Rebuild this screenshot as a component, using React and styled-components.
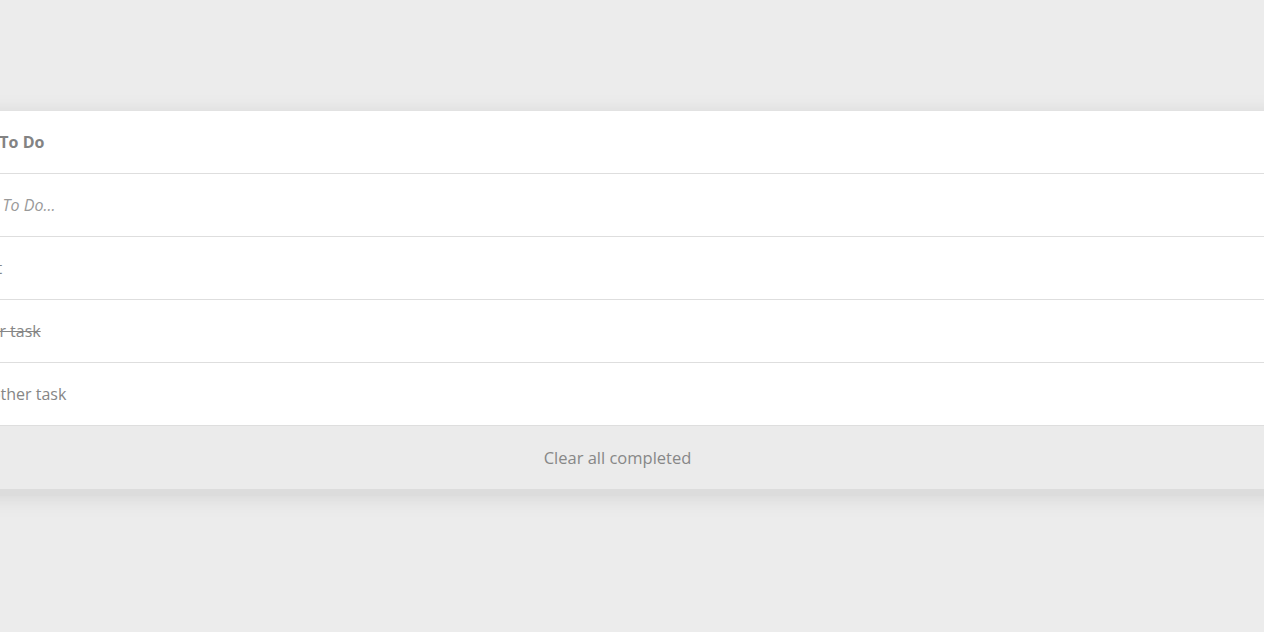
import styled, { createGlobalStyle } from "styled-components";

const GlobalStyle = createGlobalStyle`
  html, body {
    margin: 0;
    padding: 0;
    background-color: #ececec;
    font-family: "Open Sans", "DejaVu Sans", sans-serif;
    overflow: hidden;
  }
`;

const Page = styled.div`
  min-height: 632px;
  padding-top: 111px;
  box-sizing: border-box;
`;

const Card = styled.section`
  width: 1333px;
  margin-left: -49px;
  background-color: #fff;
  box-shadow: 0 7px 0 #dcdcdc, 0 10px 22px rgba(0, 0, 0, 0.07),
    0 0 20px rgba(0, 0, 0, 0.06);
`;

const Row = styled.div`
  height: 62px;
  display: flex;
  align-items: center;
  padding: 0 20px;
  border-bottom: 1px solid #dedede;
  color: #868686;
  font-size: 16px;
`;

const Title = styled(Row)`
  font-weight: 700;
  color: #838383;
`;

const Input = styled.input`
  flex: 1;
  border: none;
  outline: none;
  font: inherit;
  font-style: italic;
  color: #888;
  background: transparent;
  padding: 0;
  &::placeholder {
    color: #999;
  }
`;

const Item = styled(Row)`
  text-decoration: ${(p) => (p.done ? "line-through" : "none")};
`;

const Footer = styled.button`
  display: block;
  width: 100%;
  height: 63px;
  border: none;
  background-color: #ebebeb;
  color: #878787;
  font: inherit;
  font-size: 16.5px;
  font-weight: 500;
  text-align: center;
  padding: 0;
  cursor: pointer;
`;

const todos = [
  { text: "Test", done: false },
  { text: "Your task", done: true },
  { text: "Another task", done: false },
];

const App = () => (
  <>
    <GlobalStyle />
    <Page>
      <Card>
        <Title>My To Do</Title>
        <Row>
          <Input placeholder="Add To Do..." />
        </Row>
        {todos.map((t) => (
          <Item key={t.text} done={t.done}>
            {t.text}
          </Item>
        ))}
        <Footer>Clear all completed</Footer>
      </Card>
    </Page>
  </>
);

export default App;
